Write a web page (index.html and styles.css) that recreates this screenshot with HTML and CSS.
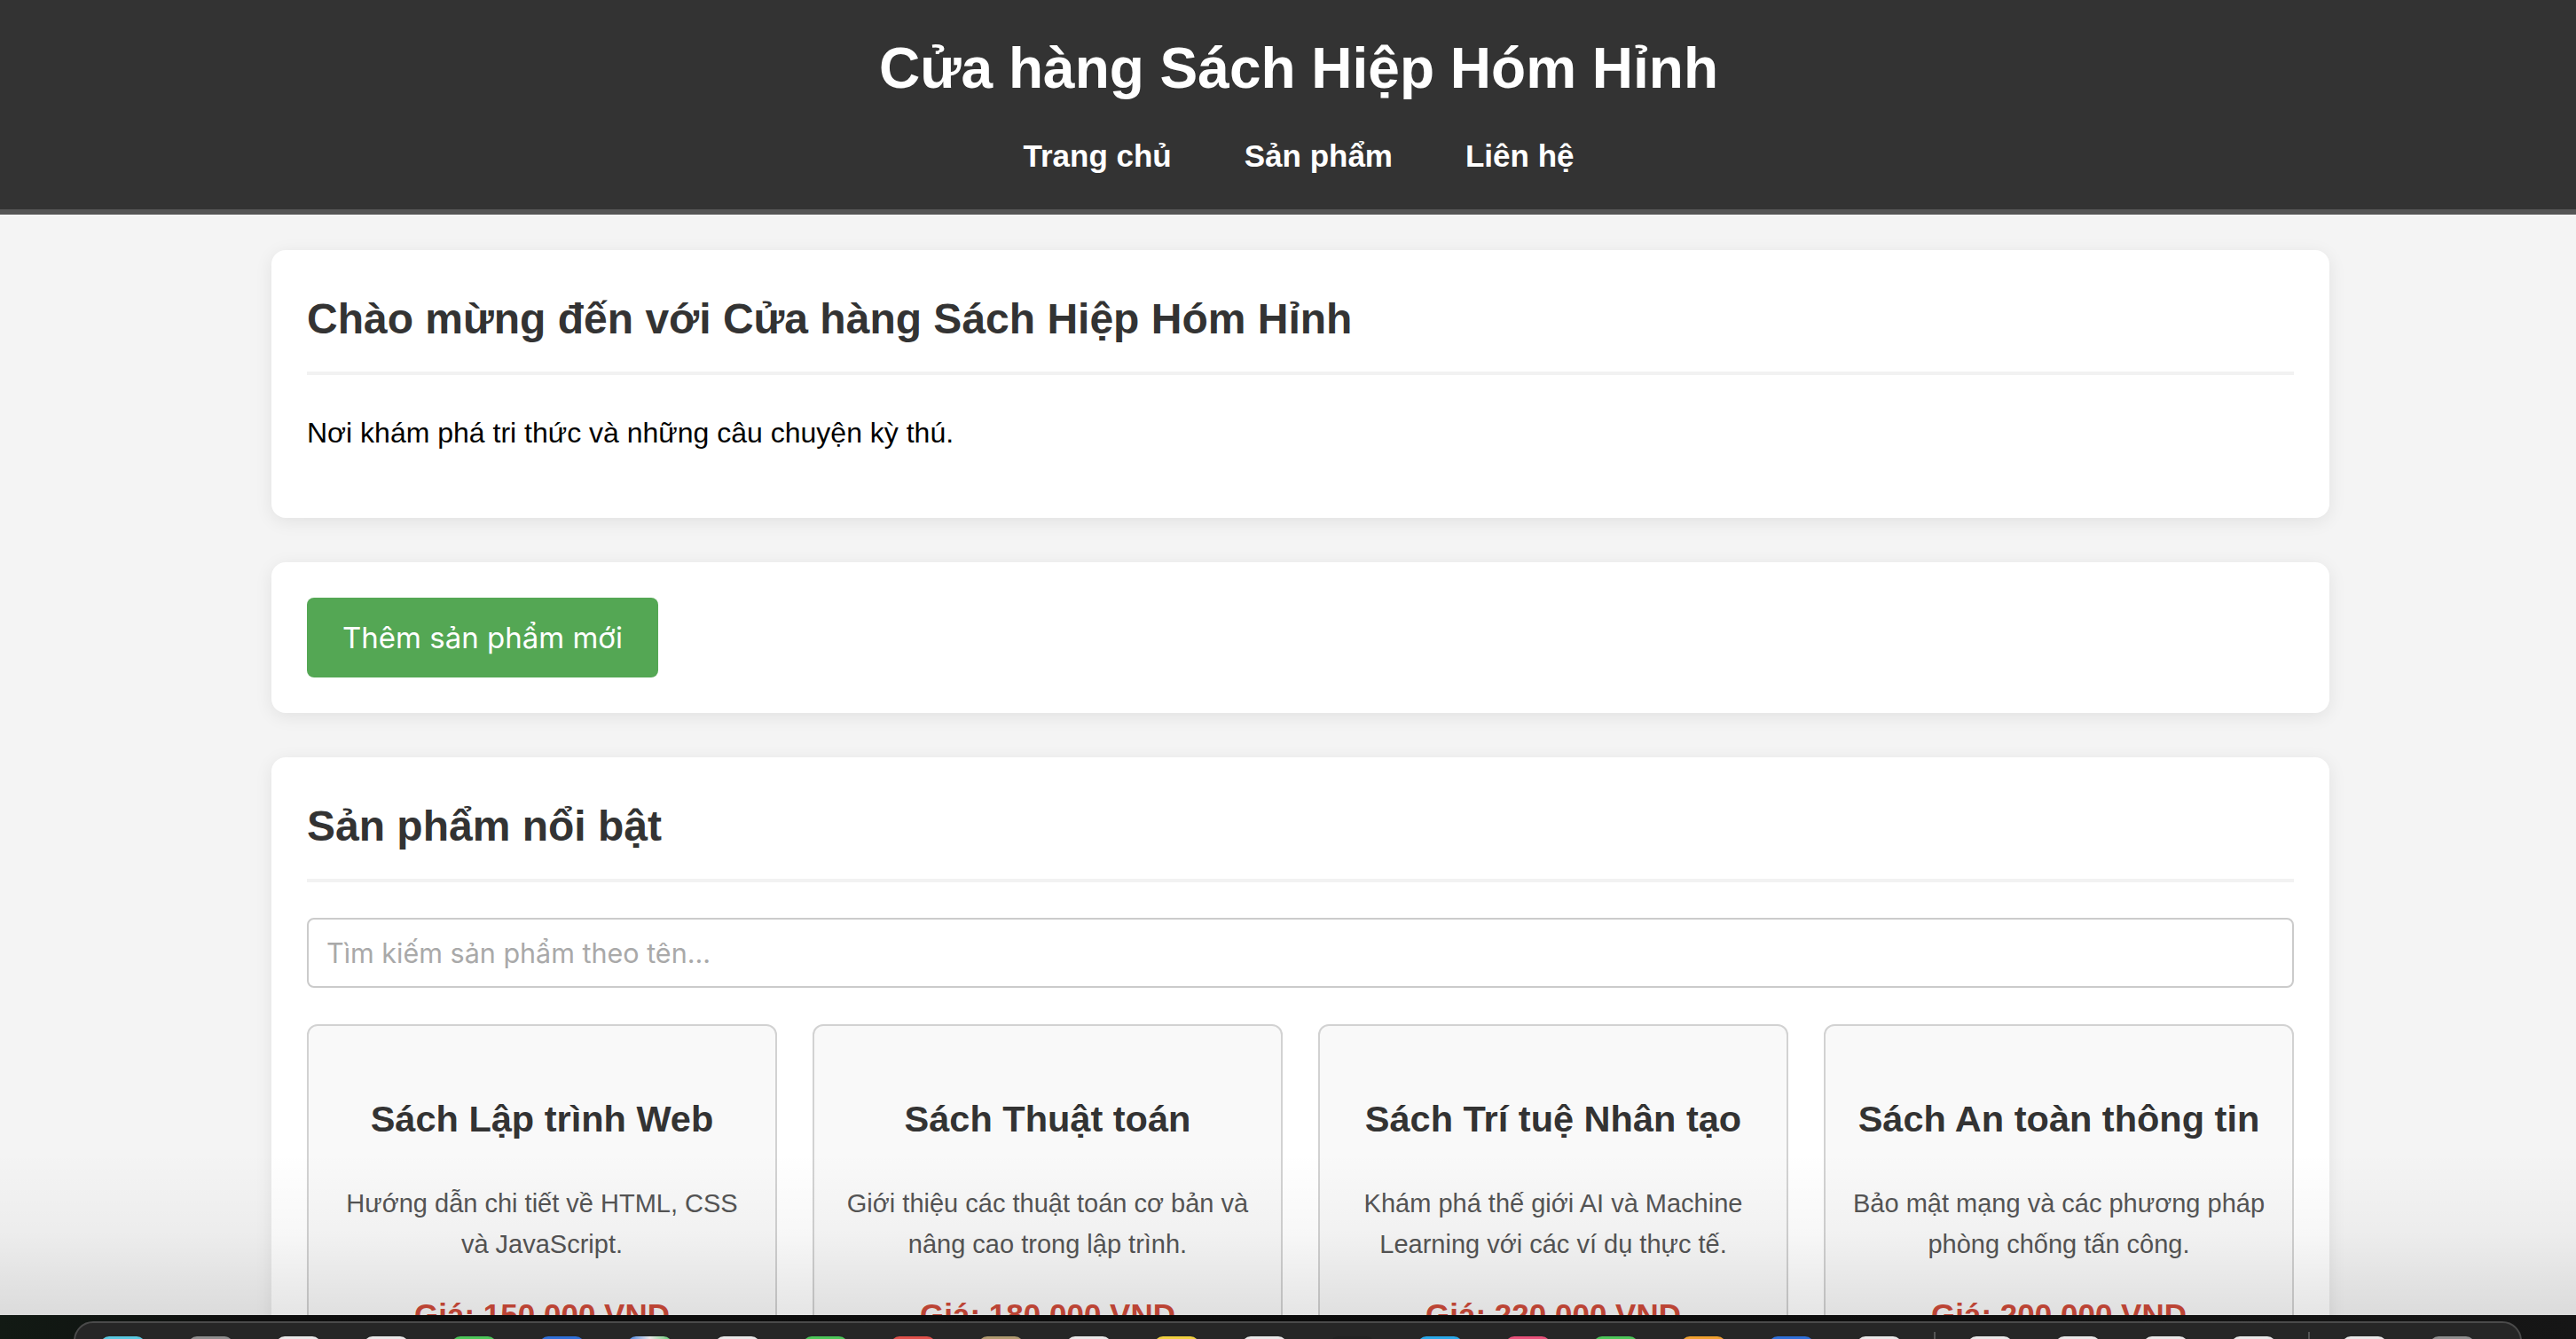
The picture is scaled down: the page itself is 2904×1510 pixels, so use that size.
FILE: index.html
```html
<!DOCTYPE html>
<html lang="vi">
<head>
<meta charset="utf-8">
<title>Cửa hàng Sách Hiệp Hóm Hỉnh</title>
<link rel="stylesheet" href="styles.css">
</head>
<body>
<header class="site-header">
  <h1 class="site-title">Cửa hàng Sách Hiệp Hóm Hỉnh</h1>
  <nav class="site-nav">
    <a href="#" class="nav-link">Trang chủ</a>
    <a href="#" class="nav-link">Sản phẩm</a>
    <a href="#" class="nav-link">Liên hệ</a>
  </nav>
</header>

<main class="main-wrap">
  <div class="container">
    <section class="panel">
      <h2 class="panel-title">Chào mừng đến với Cửa hàng Sách Hiệp Hóm Hỉnh</h2>
      <p class="intro">Nơi khám phá tri thức và những câu chuyện kỳ thú.</p>
    </section>

    <section class="panel">
      <button class="btn-add" type="button">Thêm sản phẩm mới</button>
    </section>

    <section class="panel">
      <h2 class="panel-title">Sản phẩm nổi bật</h2>
      <input class="search" type="text" placeholder="Tìm kiếm sản phẩm theo tên...">
      <div class="product-grid">
        <article class="product">
          <h3 class="product-name">Sách Lập trình Web</h3>
          <p class="product-desc">Hướng dẫn chi tiết về HTML, CSS và JavaScript.</p>
          <p class="product-price">Giá: 150.000 VND</p>
        </article>
        <article class="product">
          <h3 class="product-name">Sách Thuật toán</h3>
          <p class="product-desc">Giới thiệu các thuật toán cơ bản và nâng cao trong lập trình.</p>
          <p class="product-price">Giá: 180.000 VND</p>
        </article>
        <article class="product">
          <h3 class="product-name">Sách Trí tuệ Nhân tạo</h3>
          <p class="product-desc">Khám phá thế giới AI và Machine Learning với các ví dụ thực tế.</p>
          <p class="product-price">Giá: 220.000 VND</p>
        </article>
        <article class="product">
          <h3 class="product-name">Sách An toàn thông tin</h3>
          <p class="product-desc">Bảo mật mạng và các phương pháp phòng chống tấn công.</p>
          <p class="product-price">Giá: 200.000 VND</p>
        </article>
      </div>
    </section>
  </div>
</main>

<div class="dock-shade"></div>
<div class="desktop-strip">
  <div class="dock">
    <span class="dock-icon i-cyan"></span>
    <span class="dock-icon i-grey"></span>
    <span class="dock-icon i-white"></span>
    <span class="dock-icon i-white"></span>
    <span class="dock-icon i-green"></span>
    <span class="dock-icon i-blue"></span>
    <span class="dock-icon i-multi"></span>
    <span class="dock-icon i-white"></span>
    <span class="dock-icon i-green"></span>
    <span class="dock-icon i-red"></span>
    <span class="dock-icon i-tan"></span>
    <span class="dock-icon i-white"></span>
    <span class="dock-icon i-yellow"></span>
    <span class="dock-icon i-white"></span>
    <span class="dock-icon i-black"></span>
    <span class="dock-icon i-sky"></span>
    <span class="dock-icon i-pink"></span>
    <span class="dock-icon i-green"></span>
    <span class="dock-icon i-orange"></span>
    <span class="dock-icon i-blue"></span>
    <span class="dock-icon i-white"></span>
    <span class="dock-sep"></span>
    <span class="dock-icon i-white"></span>
    <span class="dock-icon i-white"></span>
    <span class="dock-icon i-white"></span>
    <span class="dock-icon i-white"></span>
    <span class="dock-sep"></span>
    <span class="dock-icon i-white"></span>
    <span class="dock-icon i-grey"></span>
  </div>
</div>
</body>
</html>
```

FILE: styles.css
```css
html, body {
  margin: 0;
  padding: 0;
}

body {
  background: #f4f4f4;
  font-family: "Liberation Sans", Arial, Helvetica, sans-serif;
  line-height: 1.6;
  color: #333;
  height: 1510px;
  overflow: hidden;
}

/* Header */
.site-header {
  background: #333;
  color: #fff;
  padding: 40px 0 39px 24px;
  border-bottom: 6px solid #555;
  text-align: center;
}

.site-title {
  margin: 0;
  font-size: 64px;
  line-height: 74px;
  font-weight: bold;
}

.site-nav {
  margin-top: 41px;
  display: flex;
  justify-content: center;
  gap: 82px;
}

.nav-link {
  color: #fff;
  text-decoration: none;
  font-weight: bold;
  font-size: 35px;
  line-height: 42px;
}

/* Main */
.main-wrap {
  padding-left: 28px;
}

.container {
  width: 2320px;
  margin: 40px auto 0;
}

.panel {
  background: #fff;
  border-radius: 16px;
  padding: 40px;
  margin-bottom: 50px;
  box-shadow: 0 4px 20px rgba(0, 0, 0, 0.08);
}

.panel-title {
  margin: 0 0 40px;
  padding-bottom: 20px;
  border-bottom: 4px solid #f2f2f2;
  font-size: 48px;
  line-height: 76.8px;
  color: #333;
}

.intro {
  margin: 0 0 30px;
  font-size: 32px;
  line-height: 51.2px;
  color: #000;
}

.btn-add {
  display: block;
  background: #54a754;
  color: #fff;
  border: none;
  border-radius: 8px;
  padding: 20px 40px;
  font-family: Inter, "Noto Sans", sans-serif;
  font-size: 33px;
  line-height: 50px;
  cursor: pointer;
}

.search {
  display: block;
  width: 100%;
  box-sizing: border-box;
  height: 79px;
  padding: 0 20px;
  border: 2px solid #cbcbcb;
  border-radius: 8px;
  font-family: Inter, "Noto Sans", sans-serif;
  font-size: 30.5px;
  color: #333;
  background: #fff;
}

.search::placeholder {
  color: #a9a9a9;
}

.product-grid {
  margin-top: 41px;
  display: grid;
  grid-template-columns: repeat(4, 1fr);
  gap: 40px;
}

.product {
  background: #f9f9f9;
  border: 2px solid #d2d2d2;
  border-radius: 12px;
  padding: 30px;
  text-align: center;
}

.product-name {
  margin: 43px 0 40px;
  font-size: 41.5px;
  line-height: 64px;
  color: #333;
}

.product-desc {
  margin: 0 0 30px;
  font-size: 29px;
  line-height: 46px;
  color: #555;
}

.product-price {
  margin: 0;
  font-size: 35px;
  line-height: 53px;
  font-weight: bold;
  color: #cf4b3a;
}

/* Overlays: dock shadow and desktop strip */
.dock-shade {
  position: absolute;
  left: 0;
  right: 0;
  top: 1300px;
  height: 183px;
  background: linear-gradient(to bottom, rgba(0, 0, 0, 0) 0%, rgba(0, 0, 0, 0.03) 50%, rgba(0, 0, 0, 0.1) 100%);
  pointer-events: none;
}

.desktop-strip {
  position: absolute;
  left: 0;
  right: 0;
  top: 1483px;
  height: 27px;
  background: linear-gradient(to right, #121a14 0%, #0e0e0e 10%, #0b0b0b 60%, #161616 100%);
  overflow: hidden;
}

.dock {
  position: absolute;
  left: 83px;
  right: 61px;
  top: 7px;
  height: 60px;
  background: #262626;
  border: 2px solid #4a4a4a;
  border-radius: 22px 22px 0 0;
  display: flex;
  align-items: flex-start;
  padding-left: 28px;
  gap: 48px;
  box-sizing: border-box;
}

.dock-icon {
  flex: none;
  width: 51px;
  height: 40px;
  margin-top: 15px;
  border-radius: 10px;
  background: #ddd;
}

.dock-sep {
  flex: none;
  width: 2px;
  height: 30px;
  margin-top: 10px;
  background: #555;
  margin-left: -12px;
  margin-right: -12px;
}

.i-cyan { background: #5ac8e0; }
.i-grey { background: #8e8e8e; }
.i-white { background: #e8e8e8; }
.i-green { background: #4cc659; }
.i-blue { background: #2f6fd8; }
.i-multi { background: linear-gradient(to right, #3a7be0, #e8e8e8, #5ac86a); }
.i-red { background: #e0504a; }
.i-tan { background: #b09a70; }
.i-yellow { background: #f0d040; }
.i-black { background: #222; }
.i-sky { background: #2aa8e8; }
.i-pink { background: #e8507a; }
.i-orange { background: #f0a030; }
```
